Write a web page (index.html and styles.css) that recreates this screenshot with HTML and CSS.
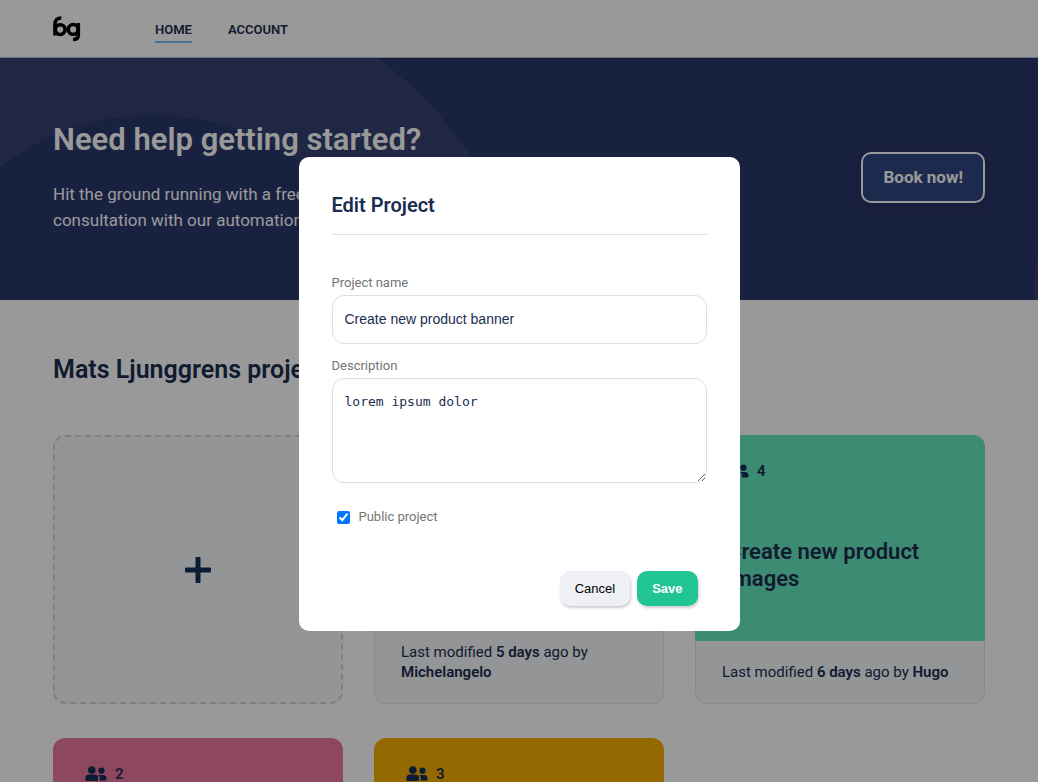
FILE: index.html
```
<!DOCTYPE html>
<html lang="en">
<head>
<meta charset="utf-8">
<meta name="viewport" content="width=device-width, initial-scale=1">
<title>Projects</title>
<link rel="stylesheet" href="styles.css">
</head>
<body>
<svg class="sprite" aria-hidden="true">
  <symbol id="people" viewBox="0 0 22 16">
    <circle cx="6.800" cy="4" r="3.800"/>
    <path d="M4 8.600h5.600a3.600 3.600 0 0 1 3.400 3.600v1.600q0 1.200-1.200 1.200H1.600Q.4 15 .4 13.800v-1.600A3.600 3.600 0 0 1 4 8.600z"/>
    <circle cx="16.500" cy="4.700" r="3.100"/>
    <path d="M13.200 9h5a3.400 3.400 0 0 1 3.300 3.400v1q0 1-1 1h-6q.3-.6.300-1.200v-1.200q0-1.800-1.600-3z"/>
  </symbol>
</svg>
<div class="page">
  <header class="topbar">
    <svg class="logo" viewBox="0 0 28 26" role="img" aria-label="bg">
      <g fill="none" stroke="#000" stroke-width="3.600">
        <path d="M8.300 2C4.300 2 2 4.300 2 8v11.500"/>
        <circle cx="7.200" cy="13.600" r="4.900"/>
        <circle cx="20.200" cy="13.400" r="4.900"/>
        <path d="M25.300 7V19.300c0 2.800-2 4.200-5.300 4.200"/>
      </g>
    </svg>
    <nav class="nav">
      <a class="nav-link active" href="#">HOME</a>
      <a class="nav-link" href="#">ACCOUNT</a>
    </nav>
  </header>
  <section class="hero">
    <svg class="hero-art" aria-hidden="true">
      <circle cx="153" cy="308" r="381" fill="#344272"/>
      <circle cx="153" cy="308" r="251" fill="#2b376c"/>
      <circle cx="1434" cy="242" r="400" fill="#344272"/>
    </svg>
    <div class="hero-text">
      <h1>Need help getting started?</h1>
      <p>Hit the ground running with a free<br>consultation with our automation</p>
    </div>
    <button class="book" type="button">Book now!</button>
  </section>
  <main class="content">
    <h2>Mats Ljunggrens projects</h2>
    <div class="grid">
      <button class="add-card" type="button" aria-label="Add project">
        <svg class="plus" viewBox="0 0 26 26"><path d="M11.500 0h3q1 0 1 1v9.500H25q1 0 1 1v3q0 1-1 1h-9.500V25q0 1-1 1h-3q-1 0-1-1v-9.500H1q-1 0-1-1v-3q0-1 1-1h9.500V1q0-1 1-1z" fill="#12305a"/></svg>
      </button>
      <article class="card">
        <div class="card-top blue"></div>
        <p class="card-foot">Last modified <b>5 days</b> ago by <b>Michelangelo</b></p>
      </article>
      <article class="card">
        <div class="card-top green">
          <div class="members"><svg class="people"><use href="#people"/></svg>4</div>
          <h3>Create new product images</h3>
        </div>
        <p class="card-foot">Last modified <b>6 days</b> ago by <b>Hugo</b></p>
      </article>
      <article class="card">
        <div class="card-top pink">
          <div class="members"><svg class="people"><use href="#people"/></svg>2</div>
        </div>
      </article>
      <article class="card">
        <div class="card-top amber">
          <div class="members"><svg class="people"><use href="#people"/></svg>3</div>
        </div>
      </article>
    </div>
  </main>
</div>
<div class="overlay">
  <form class="modal" role="dialog" aria-labelledby="modal-title">
    <h2 class="modal-title" id="modal-title">Edit Project</h2>
    <label class="label" for="name">Project name</label>
    <input class="field" id="name" type="text" value="Create new product banner">
    <label class="label" for="desc">Description</label>
    <textarea class="field area" id="desc" spellcheck="false">lorem ipsum dolor</textarea>
    <div class="check">
      <input id="public" type="checkbox" checked>
      <label for="public">Public project</label>
    </div>
    <div class="actions">
      <button class="btn cancel" type="button">Cancel</button>
      <button class="btn save" type="submit">Save</button>
    </div>
  </form>
</div>
</body>
</html>
```
FILE: styles.css
```
* { box-sizing: border-box; }
body {
  margin: 0;
  background: #fff;
  color: #1b2d50;
  font-family: Roboto, "Liberation Sans", sans-serif;
}
h1, h2, h3, p { margin: 0; }
.sprite { position: absolute; width: 0; height: 0; }
.page { height: 100vh; overflow: hidden; }

.topbar {
  display: flex;
  align-items: center;
  gap: 74px;
  height: 58px;
  padding: 0 53px;
  border-bottom: 1px solid #b4c3d2;
}
.logo { width: 28px; height: 26px; }
.nav { display: flex; gap: 36px; padding-top: 8px; }
.nav-link {
  padding-bottom: 4px;
  border-bottom: 2px solid transparent;
  color: #1b2d50;
  font-size: 13px;
  line-height: 15px;
  font-weight: 600;
  text-decoration: none;
}
.nav-link.active { border-color: #80bbec; }

.hero {
  position: relative;
  display: flex;
  align-items: center;
  justify-content: space-between;
  padding: 63px 53px 67px;
  background: #2b376c;
  color: #fff;
}
.hero-art { position: absolute; inset: 0; width: 100%; height: 100%; }
.hero-text, .book { position: relative; }
.hero-text h1 { font-size: 31px; line-height: 38px; font-weight: 600; }
.hero-text p { margin-top: 22px; font-size: 17px; line-height: 26px; }
.book {
  padding: 14px 20px;
  border: 2px solid #fff;
  border-radius: 10px;
  background: #304780;
  box-shadow: 0 4px 12px rgba(0, 0, 0, 0.2);
  color: #fff;
  font: 700 17px/19px Roboto, sans-serif;
}

.content { padding: 54px 53px; }
.content h2 { font-size: 25px; line-height: 32px; font-weight: 600; }
.grid {
  display: grid;
  grid-template-columns: repeat(3, 1fr);
  gap: 34px 31px;
  margin-top: 49px;
}
.add-card {
  display: flex;
  align-items: center;
  justify-content: center;
  border: 2px dashed #d2d6da;
  border-radius: 12px;
  background: #f5f8fb;
}
.plus { width: 26px; height: 26px; }
.card {
  display: flex;
  flex-direction: column;
  min-height: 269px;
  border-radius: 12px;
  background: #f5f8fb;
  overflow: hidden;
}
.card-top { flex: 1; padding: 26px 26px 0 32px; }
.blue { background: #6fb4f0; }
.green { background: #66e8be; }
.pink { background: #eb789e; }
.amber { background: #f7af03; }
.members {
  display: flex;
  align-items: center;
  gap: 8px;
  font-size: 15px;
  line-height: 20px;
  font-weight: 600;
}
.people { width: 22px; height: 16px; fill: #12305a; }
.card-top h3 { margin-top: 57px; font-size: 22px; line-height: 27px; font-weight: 600; }
.card-foot {
  padding: 21px 26px;
  border: 1px solid #e1e8ef;
  border-top: 0;
  border-radius: 0 0 12px 12px;
  font-size: 15px;
  line-height: 20px;
}
.card-foot b { font-weight: 600; }

.overlay {
  position: fixed;
  inset: 0;
  display: flex;
  align-items: center;
  justify-content: center;
  padding-top: 6px;
  background: rgba(0, 0, 0, 0.4);
}
.modal {
  display: flex;
  flex-direction: column;
  width: 441px;
  padding: 33px 33px 25px;
  border-radius: 10px;
  background: #fff;
}
.modal-title {
  margin-bottom: 40px;
  padding-bottom: 14px;
  border-bottom: 1px solid #e0e0e0;
  font-size: 20px;
  line-height: 30px;
  font-weight: 600;
}
.label, .check label { color: #757575; font-size: 13px; line-height: 16px; }
.label { margin-bottom: 4px; }
.field {
  margin: 0 0 14px;
  padding: 14px 12px;
  border: 1px solid #dedede;
  border-radius: 12px;
  background: #fff;
  color: #1b2d50;
  font: 14px/19px "Liberation Sans", sans-serif;
}
.area { height: 105px; font: 13px/18px "DejaVu Sans Mono", monospace; }
.check { display: flex; align-items: center; gap: 9px; margin: 12px 5px 0; }
.check input { width: 13px; height: 13px; margin: 0; }
.actions { display: flex; justify-content: flex-end; gap: 7px; margin: 46px 9px 0 0; }
.btn {
  padding: 10px 15px;
  border: 0;
  border-radius: 10px;
  box-shadow: 1px 2px 3px rgba(0, 0, 0, 0.2);
  font: 400 13px/15px "Liberation Sans", sans-serif;
}
.cancel { background: #eff0f6; color: #000; }
.save { background: #20c593; color: #fff; font-weight: 700; }
```
